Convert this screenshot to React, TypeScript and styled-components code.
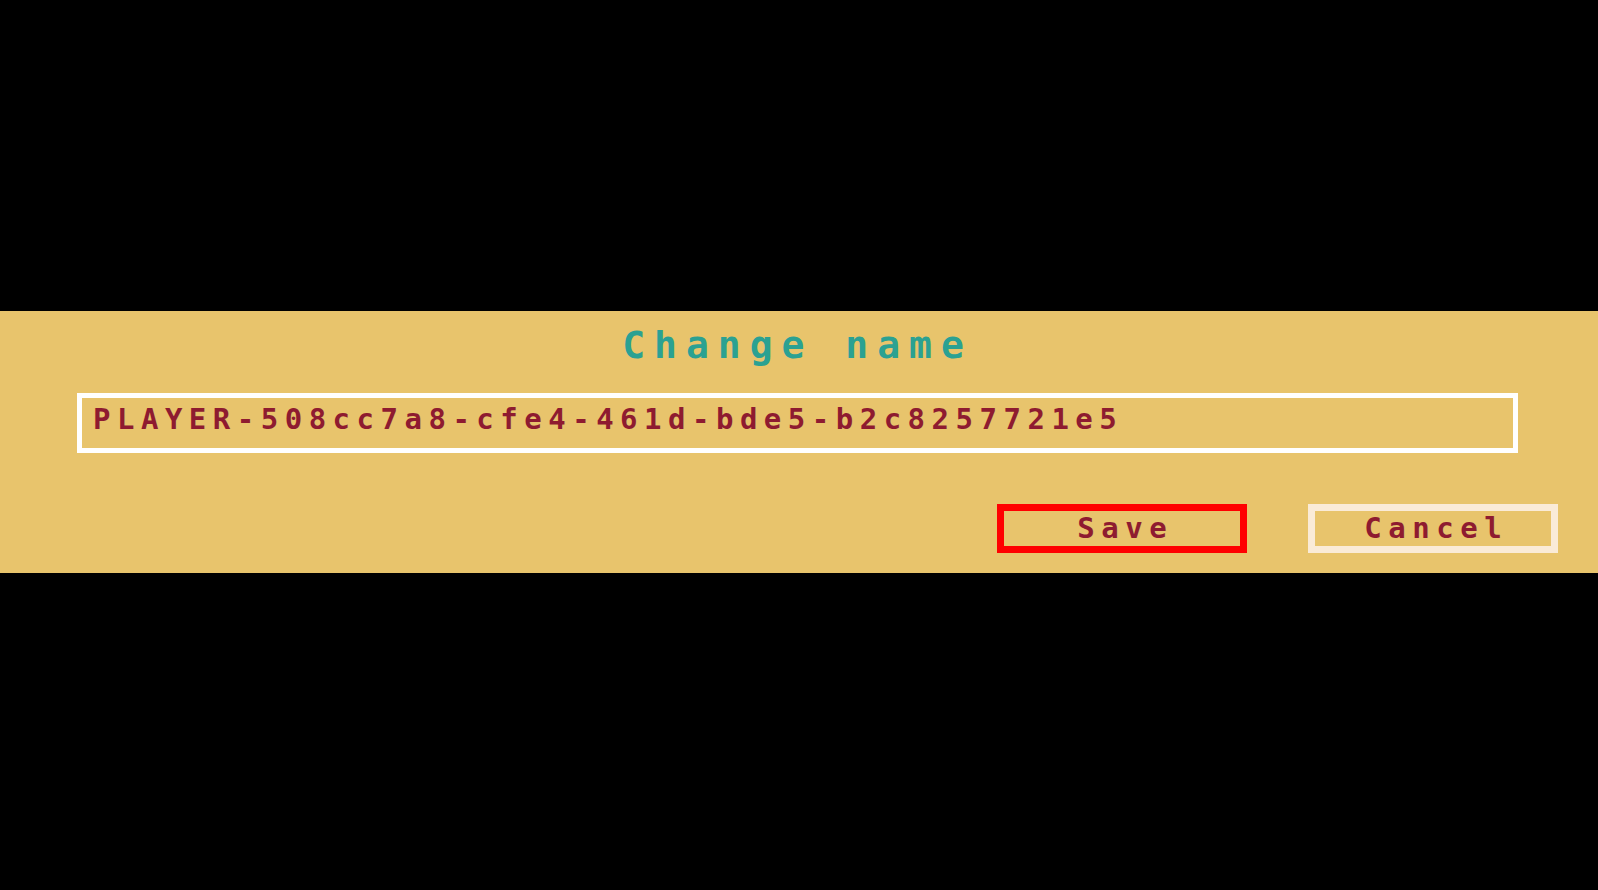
import { FC } from "react";
import styled, { createGlobalStyle } from "styled-components";

const GlobalStyle = createGlobalStyle`
  html, body {
    margin: 0;
    padding: 0;
    background: #000;
  }
  * {
    box-sizing: border-box;
  }
`;

const Page = styled.div`
  width: 100vw;
  height: 100vh;
  background: #000;
  padding-top: 311px;
  font-family: "DejaVu Sans Mono", "Liberation Mono", monospace;
  font-weight: 700;
`;

const Panel = styled.div`
  display: flex;
  flex-direction: column;
  height: 262px;
  background: #e8c46c;
  padding: 0 80px 20px 77px;
`;

const Title = styled.h1`
  margin: 0 0 14px;
  height: 68px;
  line-height: 68px;
  text-align: center;
  font-size: 38px;
  font-weight: 700;
  letter-spacing: 9px;
  color: #2ba192;
`;

const NameInput = styled.input`
  display: block;
  width: 100%;
  height: 60px;
  margin: 0;
  padding: 0 11px 9px;
  border: 5px solid #fff;
  background: transparent;
  outline: none;
  font-family: inherit;
  font-weight: 700;
  font-size: 29px;
  letter-spacing: 6.5px;
  color: #8e1b30;
`;

const Actions = styled.div`
  display: flex;
  justify-content: flex-end;
  gap: 61px;
  margin-top: auto;
  margin-right: -40px;
`;

const Button = styled.button<{ $primary?: boolean }>`
  width: 250px;
  height: 49px;
  padding: 0 0 4px;
  border: 7px solid ${(p) => (p.$primary ? "#ff0000" : "#faebd7")};
  background: transparent;
  font-family: inherit;
  font-weight: 700;
  font-size: 29px;
  letter-spacing: 6.5px;
  text-indent: 6.5px;
  color: #8e1b30;
  cursor: pointer;
`;

const App: FC = () => {
  return (
    <Page>
      <GlobalStyle />
      <Panel>
        <Title>Change name</Title>
        <NameInput defaultValue="PLAYER-508cc7a8-cfe4-461d-bde5-b2c8257721e5" />
        <Actions>
          <Button $primary>Save</Button>
          <Button>Cancel</Button>
        </Actions>
      </Panel>
    </Page>
  );
};

export default App;
